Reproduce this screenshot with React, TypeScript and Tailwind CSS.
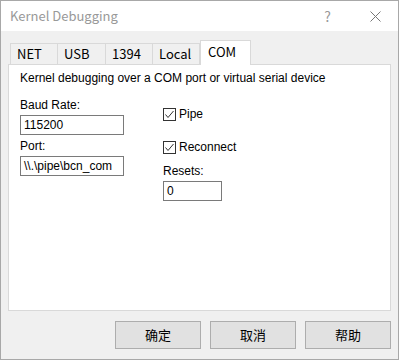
import React from "react";

const TABS = [
  { label: "NET", w: "w-[48px]" },
  { label: "USB", w: "w-[48px]" },
  { label: "1394", w: "w-[47px]" },
  { label: "Local", w: "w-[47px]" },
];

function CheckBox({ label }: { label: string }) {
  return (
    <div className="flex h-[13px] items-center gap-[3px]">
      <span className="flex h-[13px] w-[13px] items-center justify-center border border-[#333333] bg-white">
        <svg width="11" height="11" viewBox="0 0 11 11">
          <polyline
            points="1.5,5.5 4,8.5 9.5,2"
            fill="none"
            stroke="#333333"
            strokeWidth="1"
          />
        </svg>
      </span>
      <span className="text-[12px] leading-[15px] text-black">{label}</span>
    </div>
  );
}

function Field({ value, w }: { value: string; w: string }) {
  return (
    <div
      className={`flex h-[20px] ${w} items-center border border-[#7a7a7a] bg-white pl-[3px] text-[12px] text-black`}
    >
      {value}
    </div>
  );
}

export default function App() {
  return (
    <div className="flex h-[360px] w-[399px] flex-col border border-[#a8a8a8] bg-[#f0f0f0] font-['Liberation_Sans',Arial,sans-serif]">
      {/* title bar */}
      <div className="flex h-[30px] shrink-0 items-center bg-white pl-[9px] font-['Noto_Sans_CJK_SC','Noto_Sans',sans-serif] text-[13px] text-[#999999]">
        <span>Kernel Debugging</span>
        <span className="ml-auto mr-[39px] text-[14px] text-[#999999]">?</span>
        <svg width="11" height="11" viewBox="0 0 11 11" className="mr-[17px]">
          <path d="M0.5 0.5 L10.5 10.5 M10.5 0.5 L0.5 10.5" stroke="#777777" strokeWidth="1" />
        </svg>
      </div>

      <div className="flex flex-col px-[7px] pt-[9px]">
        {/* tabs */}
        <div className="flex h-[24px] items-end pl-[2px] font-['Noto_Sans_CJK_SC','Noto_Sans',sans-serif] text-[13px] text-black">
          {TABS.map((t, i) => (
            <div
              key={t.label}
              className={`flex h-[21px] ${t.w} items-center border-t border-[#d9d9d9] pl-[6px] ${i === 0 ? "border-l" : ""} border-r`}
            >
              {t.label}
            </div>
          ))}
          <div className="relative z-10 -mb-px flex h-[25px] w-[51px] items-start border-x border-t border-[#d9d9d9] bg-white pl-[7px] pt-[1px]">
            COM
          </div>
        </div>

        {/* panel */}
        <div className="flex h-[247px] flex-col border border-[#d9d9d9] bg-white pl-[11px]">
          <div className="mt-[6px] text-[12px] leading-[15px] text-black">
            Kernel debugging over a COM port or virtual serial device
          </div>
          <div className="mt-[12px] flex gap-[39px]">
            <div className="flex flex-col">
              <span className="text-[12px] leading-[15px] text-black">Baud Rate:</span>
              <div className="mt-[2px]">
                <Field value="115200" w="w-[104px]" />
              </div>
              <span className="mt-[4px] text-[12px] leading-[15px] text-black">Port:</span>
              <div className="mt-[2px]">
                <Field value="\\.\pipe\bcn_com" w="w-[104px]" />
              </div>
            </div>
            <div className="flex flex-col">
              <div className="mt-[10px]">
                <CheckBox label="Pipe" />
              </div>
              <div className="mt-[20px]">
                <CheckBox label="Reconnect" />
              </div>
              <span className="mt-[10px] text-[12px] leading-[15px] text-black">Resets:</span>
              <div className="mt-[2px]">
                <Field value="0" w="w-[59px]" />
              </div>
            </div>
          </div>
        </div>
      </div>

      {/* buttons */}
      <div className="mt-[10px] flex justify-end gap-[9px] pr-[7px] font-['Noto_Sans_CJK_SC',sans-serif] text-[13px] text-black">
        {["确定", "取消", "帮助"].map((b) => (
          <button
            key={b}
            className="flex h-[28px] w-[86px] items-center justify-center border border-[#adadad] bg-[#e1e1e1]"
          >
            {b}
          </button>
        ))}
      </div>
    </div>
  );
}
